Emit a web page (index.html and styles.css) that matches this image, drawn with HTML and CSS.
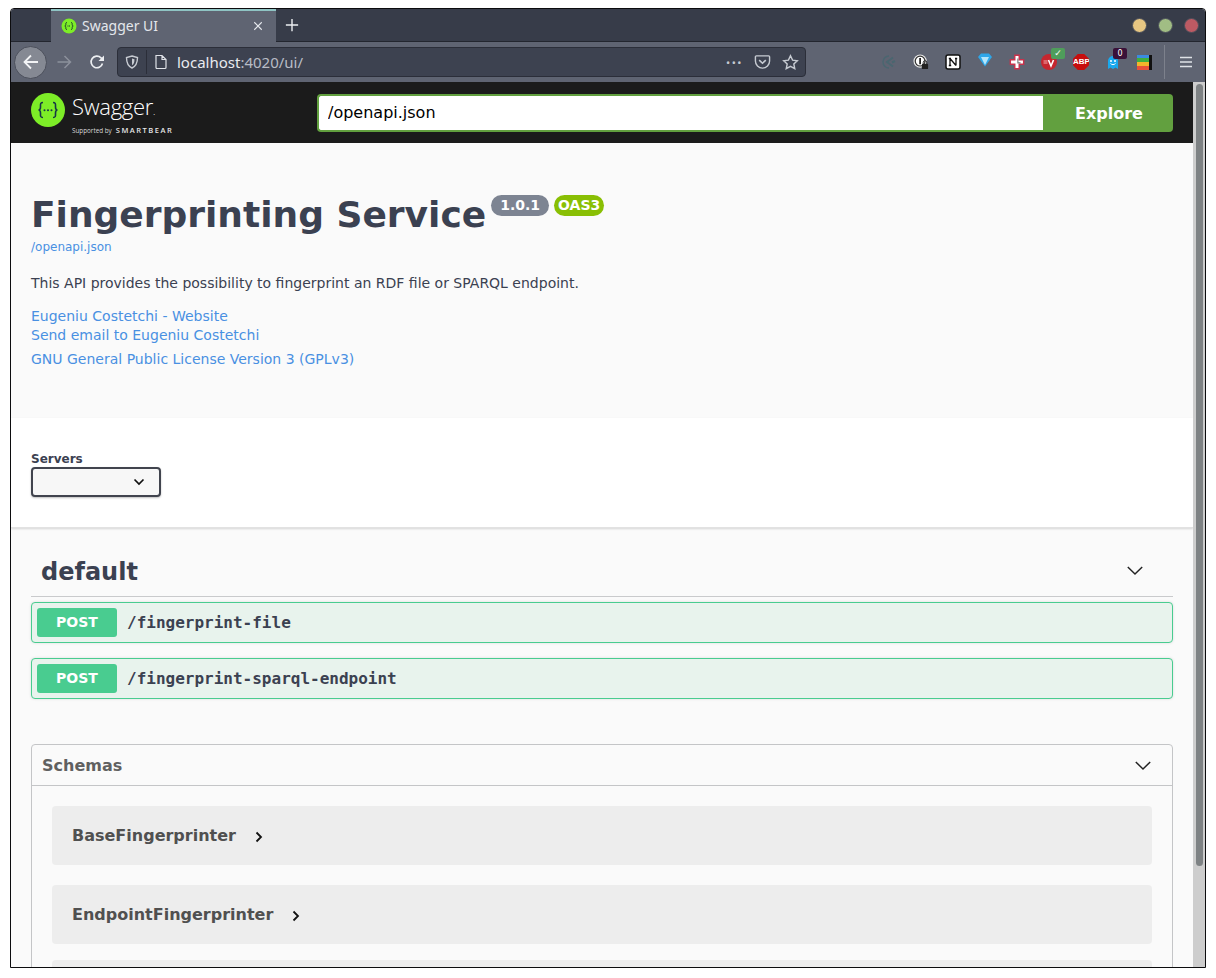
FILE: index.html
```html
<!DOCTYPE html>
<html lang="en">
<head>
    <meta charset="UTF-8">
    <meta name="viewport" content="width=device-width, initial-scale=1.0">
    <title>Swagger UI</title>
    <link rel="stylesheet" href="styles.css">
</head>
<body>
    <div class="window">
        <!-- browser tabs -->
        <div class="tabstrip">
            <div class="tab-spacer"></div>
            <div class="tab">
                <svg class="favicon" viewBox="0 0 16 16"><circle cx="8" cy="8" r="7.5" fill="#7ded27"/><path d="M6 4.500c-1.400 0-1.200 1-1.200 2 0 1-.4 1.500-1 1.500.6 0 1 .5 1 1.500s-.2 2 1.200 2M10 4.500c1.400 0 1.200 1 1.200 2 0 1 .4 1.500 1 1.500-.6 0-1 .5-1 1.500s.2 2-1.200 2" fill="none" stroke="#1c3b2c" stroke-width="1"/><path d="M6.500 8h3" stroke="#1c3b2c" stroke-dasharray="1 .5"/></svg>
                <span class="tab-title">Swagger UI</span>
                <svg class="tab-close" viewBox="0 0 12 12"><path d="M1.500 1.500l9 9M10.500 1.500l-9 9" stroke="#e4e7ec" stroke-width="1.300"/></svg>
            </div>
            <svg class="new-tab" viewBox="0 0 16 16"><path d="M8 1v14M1 8h14" stroke="#eceef1" stroke-width="1.600"/></svg>
            <div class="win-buttons">
                <span class="dot dot-yellow"></span>
                <span class="dot dot-green"></span>
                <span class="dot dot-red"></span>
            </div>
        </div>

        <!-- browser toolbar -->
        <div class="toolbar">
            <div class="back-btn">
                <svg viewBox="0 0 18 18" width="18" height="18"><path d="M16 9H2.500M9 2.500L2.500 9 9 15.500" fill="none" stroke="#f2f3f5" stroke-width="1.800"/></svg>
            </div>
            <svg class="nav-icon" viewBox="0 0 16 16"><path d="M14.500 8H1.500M8.500 2l6 6-6 6" fill="none" stroke="#8c919c" stroke-width="1.500"/></svg>
            <svg class="nav-icon reload" viewBox="0 0 16 16"><path d="M13.500 9.500A5.800 5.800 0 1 1 12 3.800L14 6" fill="none" stroke="#eceef1" stroke-width="1.700"/><path d="M15 1.500V7H9.500z" fill="#eceef1"/></svg>
            <div class="urlbar">
                <svg class="shield" viewBox="0 0 14 14"><path d="M7 1l5.500 1.500c0 5-1 8.500-5.500 10.500C2.500 11 1.500 7.500 1.500 2.500z" fill="none" stroke="#c6cad1" stroke-width="1.400"/><path d="M7 3.500l2.500.8C9.500 7 9 9 7 10.300z" fill="#c6cad1"/></svg>
                <span class="url-sep"></span>
                <svg class="page-icon" viewBox="0 0 14 16"><path d="M2 1.500h6l4 4v8a1 1 0 0 1-1 1H3a1 1 0 0 1-1-1zM8 1.500v4h4" fill="none" stroke="#e0e3e8" stroke-width="1.200"/></svg>
                <span class="url"><span class="url-host">localhost</span>:4020/ui/</span>
                <span class="url-more">•••</span>
                <svg class="url-icon" viewBox="0 0 18 16"><path d="M2.500 1.500h13a1 1 0 0 1 1 1V7a7.500 7.500 0 0 1-15 0V2.500a1 1 0 0 1 1-1z" fill="none" stroke="#c6cad1" stroke-width="1.500"/><path d="M5.500 6L9 9.300 12.500 6" fill="none" stroke="#c6cad1" stroke-width="1.700"/></svg>
                <svg class="url-icon star" viewBox="0 0 18 18"><path d="M9 1.800l2.200 4.700 5 .6-3.700 3.500 1 5L9 13.100 4.500 15.600l1-5L1.800 7.100l5-.6z" fill="none" stroke="#c6cad1" stroke-width="1.500"/></svg>
            </div>
            <div class="extensions">
                <svg class="ext" viewBox="0 0 16 16"><path d="M12 3.500L6 8l6 4.500M14 7L11 8.500" fill="none" stroke="#4a6670" stroke-width="2"/><path d="M8 2A6 6 0 0 0 8 14" fill="none" stroke="#4a6670" stroke-width="1.500"/></svg>
                <svg class="ext" viewBox="0 0 18 18"><circle cx="8" cy="8" r="7.500" fill="#e8e8e8"/><circle cx="8" cy="8" r="5.500" fill="#fff" stroke="#333" stroke-width="1.400"/><rect x="7" y="4.500" width="2" height="7" fill="#222"/><rect x="10" y="11" width="7" height="6" rx="1" fill="#222"/><path d="M11.500 11V9.500a2 2 0 0 1 4 0V11" fill="none" stroke="#222"/></svg>
                <svg class="ext notion" viewBox="0 0 16 16"><rect x="1" y="1" width="14" height="14" rx="2" fill="#fff" stroke="#111" stroke-width="1.500"/><path d="M5 4.500v7M5 4.500l6 7M11 4.500v7M3.800 4.500h2.200M3.800 11.500h2.400M10 4.500h2.200" fill="none" stroke="#111" stroke-width="1.300"/></svg>
                <svg class="ext gem" viewBox="0 0 16 16"><path d="M1 5l3-3.500h8L15 5 8 14.500z" fill="#2ea7ea"/><path d="M4 5h8L8 13z" fill="#b5e6fb"/></svg>
                <svg class="ext" viewBox="0 0 18 18"><path d="M6.500 1.500h5v5h5v5h-5v5h-5v-5h-5v-5h5z" fill="#fff" stroke="#c8324c" stroke-width="1.600"/><path d="M10 5v5h3" fill="none" stroke="#777" stroke-width="1.300"/></svg>
                <div class="ext-wrap">
                    <svg class="ext" viewBox="0 0 16 16"><circle cx="8" cy="8" r="8" fill="#c5262f"/><path d="M7.500 6l2.500 6 2.500-6" fill="none" stroke="#fff" stroke-width="1.600"/><path d="M2.500 7h4M2.500 9h4" stroke="#f3a9ad" stroke-width="1"/></svg>
                    <span class="badge-check">✓</span>
                </div>
                <div class="abp"><span>ABP</span></div>
                <div class="ext-wrap">
                    <svg class="ext" viewBox="0 0 16 16"><path d="M3 15V7a5 5 0 0 1 10 0v8l-2.500-1.500L8 15l-2.500-1.500z" fill="#19a9ee"/><circle cx="6" cy="7" r="1" fill="#fff"/><circle cx="10" cy="7" r="1" fill="#fff"/><path d="M5.500 9.500c1.500 1.500 3.500 1.500 5 0" stroke="#fff" fill="none"/></svg>
                    <span class="badge-count">0</span>
                </div>
                <div class="stack">
                    <span class="bar-blue"></span><span class="bar-green"></span><span class="bar-yellow"></span><span class="bar-red"></span>
                </div>
            </div>
            <span class="tool-sep"></span>
            <svg class="menu-icon" viewBox="0 0 14 12"><path d="M1 1.500h12M1 6h12M1 10.500h12" stroke="#dfe2e7" stroke-width="1.500"/></svg>
        </div>

        <div class="viewport">
            <div class="page">
                <!-- swagger topbar -->
                <header class="topbar">
                    <div class="logo">
                        <svg class="logo-mark" viewBox="0 0 34 34"><circle cx="17" cy="17" r="17" fill="#7ded27"/><path d="M12 9.500c-3 0-2.500 2-2.500 4.500 0 2-.8 3-2 3 1.200 0 2 1 2 3 0 2.500-.5 4.500 2.500 4.500M22 9.500c3 0 2.500 2 2.500 4.500 0 2 .8 3 2 3-1.200 0-2 1-2 3 0 2.500.5 4.500-2.500 4.500" fill="none" stroke="#173647" stroke-width="1.600"/><circle cx="13.500" cy="17.200" r="1" fill="#173647"/><circle cx="17" cy="17.200" r="1" fill="#173647"/><circle cx="20.500" cy="17.200" r="1" fill="#173647"/></svg>
                        <div class="logo-text">
                            <div class="logo-name">Swagger<span class="logo-dot">.</span></div>
                            <div class="logo-sub"><span class="logo-by">Supported by</span> <span class="logo-bear">SMARTBEAR</span></div>
                        </div>
                    </div>
                    <form class="download-url">
                        <input class="url-input" type="text" value="/openapi.json">
                        <button class="explore" type="button">Explore</button>
                    </form>
                </header>

                <section class="info">
                    <div class="title-row">
                        <h2 class="title">Fingerprinting Service</h2>
                        <span class="version">1.0.1</span>
                        <span class="oas">OAS3</span>
                    </div>
                    <a class="spec-link" href="#">/openapi.json</a>
                    <p class="description">This API provides the possibility to fingerprint an RDF file or SPARQL endpoint.</p>
                    <a class="info-link first-link" href="#">Eugeniu Costetchi - Website</a>
                    <a class="info-link" href="#">Send email to Eugeniu Costetchi</a>
                    <a class="info-link license" href="#">GNU General Public License Version 3 (GPLv3)</a>
                </section>

                <section class="servers">
                    <div class="servers-label">Servers</div>
                    <div class="servers-select">
                        <svg viewBox="0 0 12 8" width="12" height="8"><path d="M1.500 1.500L6 6l4.500-4.500" fill="none" stroke="#111" stroke-width="1.700"/></svg>
                    </div>
                </section>

                <section class="operations">
                    <div class="tag-row">
                        <h3 class="tag-name">default</h3>
                        <svg class="chevron" viewBox="0 0 20 12"><path d="M2 2l8 8 8-8" fill="none" stroke="#222" stroke-width="1.600"/></svg>
                    </div>
                    <div class="opblock">
                        <span class="method">POST</span>
                        <span class="op-path">/fingerprint-file</span>
                    </div>
                    <div class="opblock">
                        <span class="method">POST</span>
                        <span class="op-path">/fingerprint-sparql-endpoint</span>
                    </div>

                    <div class="schemas">
                        <div class="schemas-head">
                            <span class="schemas-title">Schemas</span>
                            <svg class="chevron" viewBox="0 0 20 12"><path d="M2 2l8 8 8-8" fill="none" stroke="#222" stroke-width="1.600"/></svg>
                        </div>
                        <div class="schemas-body">
                            <div class="model">
                                <span class="model-name">BaseFingerprinter</span>
                                <svg class="model-arrow" viewBox="0 0 8 12"><path d="M1.500 1.500L6 6l-4.500 4.500" fill="none" stroke="#111" stroke-width="1.800"/></svg>
                            </div>
                            <div class="model">
                                <span class="model-name">EndpointFingerprinter</span>
                                <svg class="model-arrow" viewBox="0 0 8 12"><path d="M1.500 1.500L6 6l-4.500 4.500" fill="none" stroke="#111" stroke-width="1.800"/></svg>
                            </div>
                            <div class="model model-cut"></div>
                        </div>
                    </div>
                </section>
            </div>
            <div class="scrollbar"><div class="thumb"></div></div>
        </div>
    </div>
</body>
</html>
```

FILE: styles.css
```css
* {
    box-sizing: border-box;
}

html,
body {
    margin: 0;
    height: 978px;
    overflow: hidden;
    background: #fff;
}

body {
    padding: 8px 10px 0;
    font-family: "DejaVu Sans", sans-serif;
}

.window {
    width: 1196px;
    height: 960px;
    border: 1px solid #0c0c0e;
    border-radius: 4px 4px 0 0;
    overflow: hidden;
    display: flex;
    flex-direction: column;
}

/* browser chrome */
.tabstrip {
    height: 33px;
    background: #373c49;
    display: flex;
    align-items: center;
    flex-shrink: 0;
    border-bottom: 1px solid #23262f;
}

.tab-spacer {
    width: 40px;
}

.tab {
    width: 225px;
    height: 33px;
    background: #5f6472;
    border-top: 2px solid #8fc4c4;
    display: flex;
    align-items: center;
    padding: 0 12px 0 10px;
    font-family: "Noto Sans", sans-serif;
    font-size: 14px;
    color: #e4e7ec;
}

.favicon {
    width: 16px;
    height: 16px;
    margin-right: 5px;
}

.tab-title {
    flex: 1;
    padding-bottom: 2px;
}

.tab-close {
    width: 10px;
    height: 10px;
    margin-right: 1px;
}

.new-tab {
    width: 14px;
    height: 14px;
    margin-left: 9px;
}

.win-buttons {
    margin-left: auto;
    display: flex;
    gap: 11px;
    padding-right: 6px;
}

.dot {
    width: 15px;
    height: 15px;
    border-radius: 50%;
    border: 1px solid #4a4e5a;
}

.dot-yellow {
    background: #e6c682;
}

.dot-green {
    background: #a1bd84;
}

.dot-red {
    background: #bd5a63;
}

.toolbar {
    height: 40px;
    background: #5f6472;
    display: flex;
    align-items: center;
    padding: 0 12px 0 3px;
    flex-shrink: 0;
}

.back-btn {
    width: 33px;
    height: 33px;
    border-radius: 50%;
    background: #858993;
    border: 1px solid #4b4f5b;
    display: flex;
    align-items: center;
    justify-content: center;
}

.nav-icon {
    width: 16px;
    height: 16px;
    margin-left: 9px;
}

.reload {
    margin-left: 17px;
}

.urlbar {
    width: 689px;
    height: 30px;
    margin-left: 12px;
    background: #3d4250;
    border: 1px solid #2b2e39;
    border-radius: 4px;
    display: flex;
    align-items: center;
    padding: 0 6px 0 7px;
    font-family: "Noto Sans", sans-serif;
    font-size: 15px;
    color: #b8bcc5;
}

.shield {
    width: 14px;
    height: 14px;
}

.url-sep {
    width: 1px;
    height: 24px;
    background: #2b2e39;
    margin: 0 7px;
}

.page-icon {
    width: 14px;
    height: 16px;
    margin-right: 9px;
}

.url {
    flex: 1;
}

.url-host {
    color: #e9ebef;
}

.url-more {
    font-size: 11px;
    color: #c6cad1;
    letter-spacing: 1.500px;
    margin-right: 11px;
}

.url-icon {
    width: 17px;
    height: 16px;
    margin-right: 11px;
}

.url-icon.star {
    width: 17px;
    height: 17px;
    margin-right: 0;
}

.extensions {
    display: flex;
    align-items: center;
    gap: 16px;
    margin-left: 75px;
}

.ext-wrap {
    position: relative;
    display: flex;
}

.ext {
    width: 16px;
    height: 16px;
    display: block;
}

.gem {
    margin-top: -4px;
}

.badge-check {
    position: absolute;
    top: -6px;
    left: 10px;
    width: 14px;
    height: 11px;
    background: #4f9d5b;
    border-radius: 2px;
    color: #fff;
    font-size: 9px;
    line-height: 11px;
    text-align: center;
}

.badge-count {
    position: absolute;
    top: -6px;
    left: 8px;
    width: 14px;
    height: 11px;
    background: #3a1138;
    border-radius: 2px;
    color: #fff;
    font-size: 8px;
    line-height: 11px;
    text-align: center;
}

.abp {
    width: 16px;
    height: 16px;
    background: #c70d0d;
    clip-path: polygon(30% 0, 70% 0, 100% 30%, 100% 70%, 70% 100%, 30% 100%, 0 70%, 0 30%);
    color: #fff;
    font-family: "Liberation Sans", sans-serif;
    font-size: 8px;
    font-weight: bold;
    line-height: 16px;
    text-align: center;
}

.stack {
    width: 15px;
    height: 15px;
    border-right: 3px solid #111;
    display: flex;
    flex-direction: column;
}

.stack span {
    flex: 1;
}

.bar-blue {
    background: #3b8be0;
}

.bar-green {
    background: #3fae3f;
}

.bar-yellow {
    background: #f3b52a;
}

.bar-red {
    background: #e8503a;
}

.tool-sep {
    width: 1px;
    height: 34px;
    background: #7d818c;
    margin-left: 12px;
}

.menu-icon {
    width: 14px;
    height: 12px;
    margin-left: 14px;
}

/* page */
.viewport {
    flex: 1;
    display: flex;
    min-height: 0;
}

.page {
    width: 1182px;
    overflow: hidden;
    background: #fff;
}

.scrollbar {
    width: 12px;
    background: #cdcdcd;
    padding: 2px 2px 0 3px;
}

.thumb {
    height: 782px;
    background: #7e8284;
    border-radius: 4px;
}

.topbar {
    height: 61px;
    background: #1b1b1b;
    display: flex;
    align-items: center;
    padding: 0 20px;
}

.logo {
    width: 286px;
    display: flex;
    align-items: center;
    color: #fff;
}

.logo-mark {
    width: 34px;
    height: 34px;
    margin-right: 7px;
    margin-top: -5px;
}

.logo-text {
    margin-top: 3px;
}

.logo-name {
    font-family: "Open Sans", sans-serif;
    font-weight: 300;
    font-size: 22px;
    line-height: 22px;
    letter-spacing: -0.3px;
    margin-top: 2px;
}

.logo-dot {
    font-size: 10px;
}

.logo-sub {
    font-family: "Open Sans", sans-serif;
    line-height: 11px;
    white-space: nowrap;
}

.logo-by {
    font-size: 6.300px;
    color: #d8d8d8;
}

.logo-bear {
    font-size: 7.500px;
    font-weight: 600;
    letter-spacing: 1.500px;
    color: #e6e6e6;
}

.download-url {
    flex: 1;
    display: flex;
    height: 38px;
    margin: 0;
}

.url-input {
    flex: 1;
    min-width: 0;
    height: 38px;
    border: 2px solid #62a03f;
    border-right: none;
    border-radius: 4px 0 0 4px;
    background: #fff;
    padding: 0 9px;
    font-family: "DejaVu Sans", sans-serif;
    font-size: 16px;
    color: #000;
    outline: none;
}

.explore {
    width: 130px;
    height: 38px;
    border: none;
    border-radius: 0 4px 4px 0;
    background: #62a03f;
    color: #fff;
    font-family: "DejaVu Sans", sans-serif;
    font-size: 16px;
    font-weight: bold;
    padding: 2px 0 0 2px;
}

.info {
    height: 275px;
    background: #fafafa;
    padding: 50px 20px 0;
    color: #3b4151;
}

.title-row {
    display: flex;
    align-items: flex-start;
}

.title {
    margin: 0;
    font-size: 36px;
    line-height: 43px;
    font-weight: bold;
    color: #3b4151;
}

.version,
.oas {
    height: 21px;
    margin-top: 2px;
    border-radius: 57px;
    color: #fff;
    font-size: 14px;
    line-height: 20px;
    font-weight: bold;
    text-align: center;
}

.version {
    width: 58px;
    margin-left: 5px;
    background: #7d8492;
}

.oas {
    width: 50px;
    margin-left: 5px;
    background: #89bf04;
}

.spec-link {
    display: block;
    font-size: 12px;
    line-height: 15px;
    margin-top: 4px;
    color: #4990e2;
    text-decoration: none;
}

.description {
    margin: 20px 0 14px;
    font-size: 14px;
    line-height: 17px;
    color: #3b4151;
}

.info-link {
    display: block;
    font-size: 14px;
    line-height: 20px;
    color: #4990e2;
    text-decoration: none;
}

.first-link {
    height: 19px;
}

.license {
    margin-top: 4px;
}

.servers {
    height: 110px;
    background: #fff;
    padding: 34px 20px 0;
    box-shadow: 0 1px 2px rgba(0, 0, 0, 0.15);
    border-bottom: 1px solid #e2e2e2;
    position: relative;
}

.servers-label {
    font-size: 12px;
    font-weight: bold;
    line-height: 14px;
    color: #3b4151;
}

.servers-select {
    width: 130px;
    height: 30px;
    margin-top: 1px;
    background: #f7f7f7;
    border: 2px solid #41444e;
    border-radius: 4px;
    box-shadow: 0 1px 2px rgba(0, 0, 0, 0.25);
    display: flex;
    align-items: center;
    padding-left: 100px;
}

.operations {
    background: #fafafa;
    padding: 0 20px;
    height: 500px;
}

.tag-row {
    height: 69px;
    display: flex;
    align-items: center;
    justify-content: space-between;
    padding: 20px 29px 0 10px;
    border-bottom: 1px solid #c9cacc;
    margin-bottom: 5px;
}

.tag-name {
    margin: 0;
    font-size: 24px;
    font-weight: bold;
    color: #3b4151;
}

.chevron {
    width: 18px;
    height: 11px;
}

.tag-row .chevron {
    margin-top: -4px;
}

.opblock {
    height: 41px;
    margin-bottom: 15px;
    background: #e8f3ed;
    border: 1px solid #49cc90;
    border-radius: 4px;
    box-shadow: 0 0 3px rgba(0, 0, 0, 0.12);
    display: flex;
    align-items: center;
    padding: 0 5px;
}

.method {
    width: 80px;
    height: 29px;
    background: #49cc90;
    border-radius: 3px;
    color: #fff;
    font-size: 14px;
    font-weight: bold;
    line-height: 28px;
    text-align: center;
}

.op-path {
    margin-left: 10px;
    font-family: "DejaVu Sans Mono", monospace;
    font-size: 16px;
    font-weight: bold;
    color: #3b4151;
}

.schemas {
    margin-top: 45px;
    border: 1px solid #c4c5c7;
    border-radius: 4px 4px 0 0;
}

.schemas-head {
    height: 41px;
    display: flex;
    align-items: center;
    justify-content: space-between;
    padding: 0 20px 0 10px;
    border-bottom: 1px solid #c4c5c7;
}

.schemas-title {
    font-size: 16px;
    font-weight: bold;
    color: #606060;
}

.schemas-body {
    padding: 20px 20px 0;
}

.model {
    height: 59px;
    margin-bottom: 20px;
    background: #ededed;
    border-radius: 4px;
    display: flex;
    align-items: center;
    padding: 0 20px;
}

.model-name {
    font-size: 16px;
    font-weight: bold;
    color: #505050;
}

.model-arrow {
    width: 8px;
    height: 12px;
    margin-left: 19px;
    margin-top: 3px;
}

.model-cut {
    margin-top: -4px;
}
```
